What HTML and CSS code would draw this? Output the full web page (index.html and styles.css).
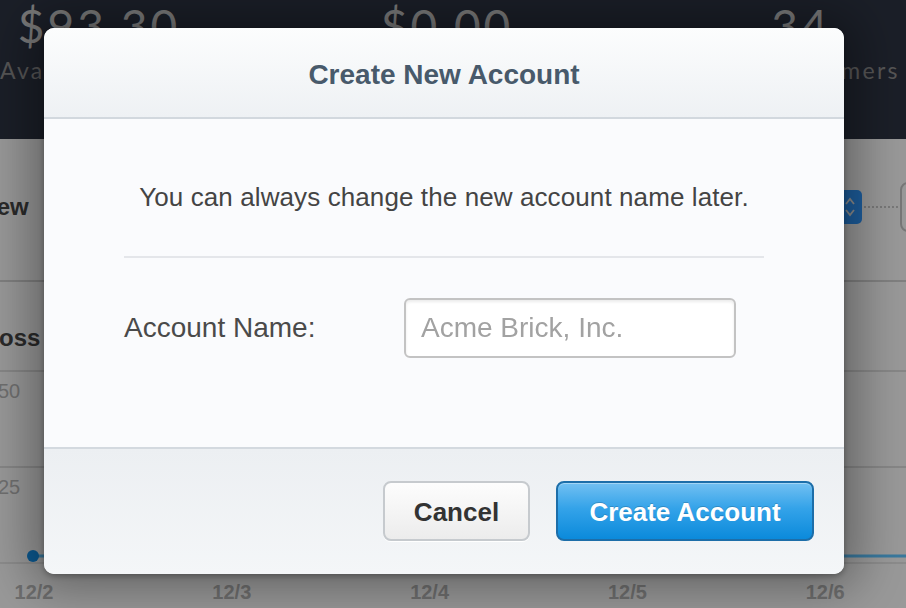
FILE: index.html
```html
<!DOCTYPE html>
<html lang="en">
<head>
<meta charset="utf-8">
<title>Create New Account</title>
<link rel="stylesheet" href="styles.css">
</head>
<body>
<div class="page">
  <header class="stats">
    <div class="stat">
      <div class="stat-value">$93.30</div>
      <div class="stat-label">Available Balance</div>
    </div>
    <div class="stat">
      <div class="stat-value">$0.00</div>
      <div class="stat-label">Pending Balance</div>
    </div>
    <div class="stat">
      <div class="stat-value">34</div>
      <div class="stat-label">Total Customers</div>
    </div>
  </header>

  <section class="toolbar">
    <h2 class="toolbar-title">Overview</h2>
    <div class="range">
      <div class="select">
        <svg class="select-arrows" width="12" height="22" viewBox="0 0 12 22">
          <path d="M2 8 L6 3 L10 8" fill="none" stroke="#e4e4e4" stroke-width="1.8"/>
          <path d="M2 14 L6 19 L10 14" fill="none" stroke="#e4e4e4" stroke-width="1.8"/>
        </svg>
      </div>
      <span class="dots"></span>
      <div class="date-box"></div>
    </div>
  </section>

  <section class="chart">
    <h3 class="chart-title">Gross volume</h3>
    <div class="chart-area">
      <div class="grid-row"><span class="y-label">50</span></div>
      <div class="grid-row"><span class="y-label">25</span></div>
      <svg class="series" width="906" height="20" viewBox="0 0 906 20">
        <line x1="33" y1="14" x2="906" y2="14" stroke="#5ec4ff" stroke-width="3"/>
        <circle cx="33" cy="14" r="6" fill="#1290ea"/>
      </svg>
    </div>
    <div class="x-axis">
      <span>12/2</span><span>12/3</span><span>12/4</span><span>12/5</span><span>12/6</span>
    </div>
  </section>
</div>

<div class="backdrop"></div>

<div class="modal">
  <div class="modal-header">
    <h1 class="modal-title">Create New Account</h1>
  </div>
  <div class="modal-body">
    <p class="modal-note">You can always change the new account name later.</p>
    <hr class="modal-rule">
    <div class="field">
      <label class="field-label" for="acct">Account Name:</label>
      <input class="field-input" id="acct" type="text" placeholder="Acme Brick, Inc.">
    </div>
  </div>
  <div class="modal-footer">
    <button class="btn btn-cancel">Cancel</button>
    <button class="btn btn-primary">Create Account</button>
  </div>
</div>
</body>
</html>
```
FILE: styles.css
```css
* { box-sizing: border-box; }

html, body {
  margin: 0;
  padding: 0;
  width: 906px;
  height: 608px;
  overflow: hidden;
  font-family: "Liberation Sans", Arial, sans-serif;
  background: #f7f7f7;
}

.page {
  width: 906px;
  height: 608px;
  overflow: hidden;
}

/* dark stats header */
.stats {
  height: 139px;
  background: #2c3242;
  display: grid;
  grid-template-columns: 198px 1fr 210px;
  font-family: Lato, "Liberation Sans", sans-serif;
}
.stat {
  text-align: center;
  white-space: nowrap;
}
.stat-value {
  font-size: 46px;
  line-height: 46px;
  margin-top: 3px;
  letter-spacing: 3px;
  color: #c6c6c6;
}
.stat-label {
  margin-top: 7px;
  font-size: 23px;
  line-height: 28px;
  letter-spacing: 2.3px;
  color: #8c8c8c;
}

/* toolbar */
.toolbar {
  height: 143px;
  border-bottom: 2px solid #cfcfcf;
  display: flex;
  align-items: center;
  justify-content: space-between;
}
.toolbar-title {
  margin: 0 0 6px -78px;
  font-size: 24px;
  font-weight: bold;
  color: #444;
}
.range {
  display: flex;
  align-items: center;
  margin-right: -40px;
  margin-bottom: 6px;
}
.select {
  width: 60px;
  height: 34px;
  border-radius: 5px;
  background: #2f98ff;
  display: flex;
  align-items: center;
  justify-content: flex-end;
  padding-right: 6px;
}
.dots {
  width: 34px;
  border-top: 2px dotted #c4c4c4;
  margin: 0 2px;
}
.date-box {
  width: 46px;
  height: 50px;
  border: 2px solid #c2c2c2;
  border-radius: 8px;
  background: #f9f9f9;
}

/* chart */
.chart {
  padding-top: 42px;
}
.chart-title {
  margin: 0 0 0 -29px;
  font-size: 24px;
  line-height: 28px;
  font-weight: bold;
  color: #444;
  word-spacing: 2px;
}
.chart-area {
  margin-top: 18px;
  position: relative;
}
.grid-row {
  height: 96px;
  border-top: 2px solid #dadada;
  padding-top: 8px;
}
.y-label {
  font-size: 20px;
  color: #b5b5b5;
  margin-left: -2px;
}
.series {
  position: absolute;
  left: 0;
  bottom: 0;
  display: block;
}
.x-axis {
  border-top: 2px solid #e2e2e2;
  display: grid;
  grid-template-columns: repeat(5, 197.8px);
  padding-top: 17px;
}
.x-axis span {
  width: 68px;
  text-align: center;
  font-size: 20px;
  font-weight: bold;
  color: #b3b3b3;
}

/* overlay */
.backdrop {
  position: fixed;
  inset: 0;
  background: rgba(0, 0, 0, 0.38);
}

/* modal */
.modal {
  position: absolute;
  left: 44px;
  top: 28px;
  width: 800px;
  border-radius: 10px;
  overflow: hidden;
  background: #fafbfd;
  box-shadow: 0 0 50px 14px rgba(0, 0, 0, 0.36), 0 2px 6px rgba(0, 0, 0, 0.3);
  display: flex;
  flex-direction: column;
}
.modal-header {
  height: 91px;
  border-bottom: 2px solid #d2d8de;
  background: linear-gradient(#fcfdfd, #eef1f4);
  display: flex;
  align-items: center;
  justify-content: center;
}
.modal-title {
  margin: 0;
  padding-top: 4px;
  font-size: 28px;
  font-weight: bold;
  color: #485a6b;
}
.modal-body {
  padding: 63px 80px 0;
  height: 328px;
  background: #fafbfd;
}
.modal-note {
  margin: 0;
  font-size: 26px;
  line-height: 30px;
  text-align: center;
  letter-spacing: 0.1px;
  color: #444;
}
.modal-rule {
  margin: 44px 0 0;
  border: 0;
  height: 2px;
  background: #e4e6ea;
}
.field {
  margin-top: 40px;
  display: flex;
  align-items: center;
}
.field-label {
  width: 280px;
  font-size: 28px;
  color: #4a4a4a;
}
.field-input {
  width: 332px;
  height: 60px;
  border: 2px solid #c3c3c3;
  border-radius: 6px;
  padding: 0 0 0 15px;
  background: #fff;
  box-shadow: inset 0 2px 3px rgba(0, 0, 0, 0.08);
  font-family: "Liberation Sans", Arial, sans-serif;
  font-size: 28px;
  color: #333;
  outline: none;
}
.field-input::placeholder {
  color: #a2a2a2;
}
.modal-footer {
  border-top: 2px solid #d3d9df;
  background: linear-gradient(#eceff2, #f4f6f8);
  padding: 32px 30px 33px;
  display: flex;
  justify-content: flex-end;
  gap: 26px;
}
.btn {
  height: 60px;
  border-radius: 8px;
  font-family: "Liberation Sans", Arial, sans-serif;
  font-size: 26px;
  font-weight: bold;
  padding: 2px 0 0;
  cursor: pointer;
}
.btn-cancel {
  width: 147px;
  border: 2px solid #c6cace;
  background: linear-gradient(#fdfdfd, #ececec);
  color: #333;
  box-shadow: 0 1px 0 #fff;
}
.btn-primary {
  width: 258px;
  border: 2px solid #1d6ea9;
  background: linear-gradient(#72c0f2 0%, #34a3e9 45%, #0b8adb 100%);
  color: #fff;
  text-shadow: 0 -1px 0 rgba(0, 0, 0, 0.18);
  box-shadow: inset 0 1px 0 rgba(255, 255, 255, 0.35);
}
```
